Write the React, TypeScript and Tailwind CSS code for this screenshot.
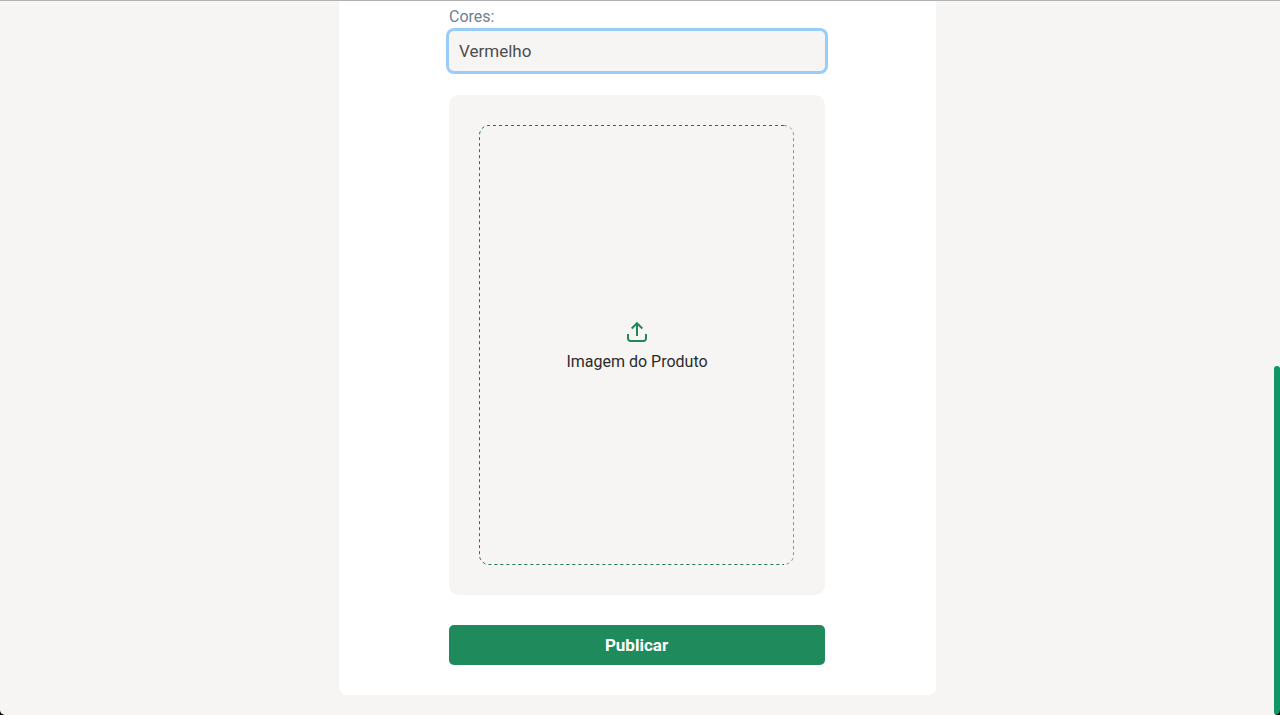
import { useState } from "react";

function UploadIcon() {
  return (
    <svg
      className="h-6 w-6 shrink-0"
      viewBox="0 0 24 24"
      fill="none"
      stroke="#23875a"
      strokeWidth="2"
    >
      <path d="M12 16V3.5M6.700 8.500 12 3.200l5.300 5.300" />
      <path d="M3 14V18.500a2.500 2.500 0 0 0 2.500 2.500h13a2.500 2.500 0 0 0 2.500-2.500V14" />
    </svg>
  );
}

function DashedOutline() {
  return (
    <svg className="absolute inset-0 h-full w-full" viewBox="0 0 315 440" fill="none">
      <g stroke="#23755a" strokeDasharray="3 3">
        <path d="M305 0.5H10A9.5 9.5 0 0 0 0.5 10V430A9.5 9.5 0 0 0 10 439.5H305" />
        <path d="M305 0.5A9.5 9.5 0 0 1 314.5 10V430A9.5 9.5 0 0 1 305 439.5" opacity="0.65" />
      </g>
    </svg>
  );
}

export default function App() {
  const [color, setColor] = useState("Vermelho");

  return (
    <div className="relative flex h-[715px] w-full justify-center overflow-hidden border-t border-[#b2b2b2] bg-[#f6f5f4] pr-[5px] font-['Roboto',sans-serif]">
      <form className="flex h-[694px] w-[597px] flex-col rounded-b-lg bg-white pt-1 pr-[111px] pl-[110px]">
        <label htmlFor="cores" className="h-6 text-base leading-6 text-[#708090]">
          Cores:
        </label>
        <input
          id="cores"
          className="mt-0.5 h-10 w-full shrink-0 rounded-[5px] bg-[#f6f5f4] px-2.5 text-[17px] text-[#4d4d4d] ring-3 ring-[#99cdf9] outline-none"
          value={color}
          onChange={(e) => setColor(e.target.value)}
        />
        <div className="mt-6 h-[500px] w-full shrink-0 rounded-[10px] bg-[#f6f5f4] p-[30px]">
          <div className="relative flex h-[440px] w-[315px] flex-col items-center justify-center pt-1 pl-px">
            <DashedOutline />
            <UploadIcon />
            <span className="mt-1.5 text-base leading-6 text-[#2b2b2b]">Imagem do Produto</span>
          </div>
        </div>
        <button
          type="button"
          className="mt-[30px] h-10 w-full shrink-0 rounded-[5px] bg-[#1f8b5c] pt-px pr-px text-[17px] font-bold text-white"
        >
          Publicar
        </button>
      </form>
      <div className="absolute right-0 bottom-0 h-[349px] w-1.5 rounded-[3px] bg-[#0f9765]" />
      <svg className="absolute bottom-0 left-0 h-[5px] w-[5px]" viewBox="0 0 5 5">
        <path d="M0 0A5 5 0 0 0 5 5H0Z" fill="#000" />
      </svg>
      <svg className="absolute right-0 bottom-0 h-[5px] w-[5px]" viewBox="0 0 5 5">
        <path d="M5 0A5 5 0 0 1 0 5H5Z" fill="#000" />
      </svg>
    </div>
  );
}
